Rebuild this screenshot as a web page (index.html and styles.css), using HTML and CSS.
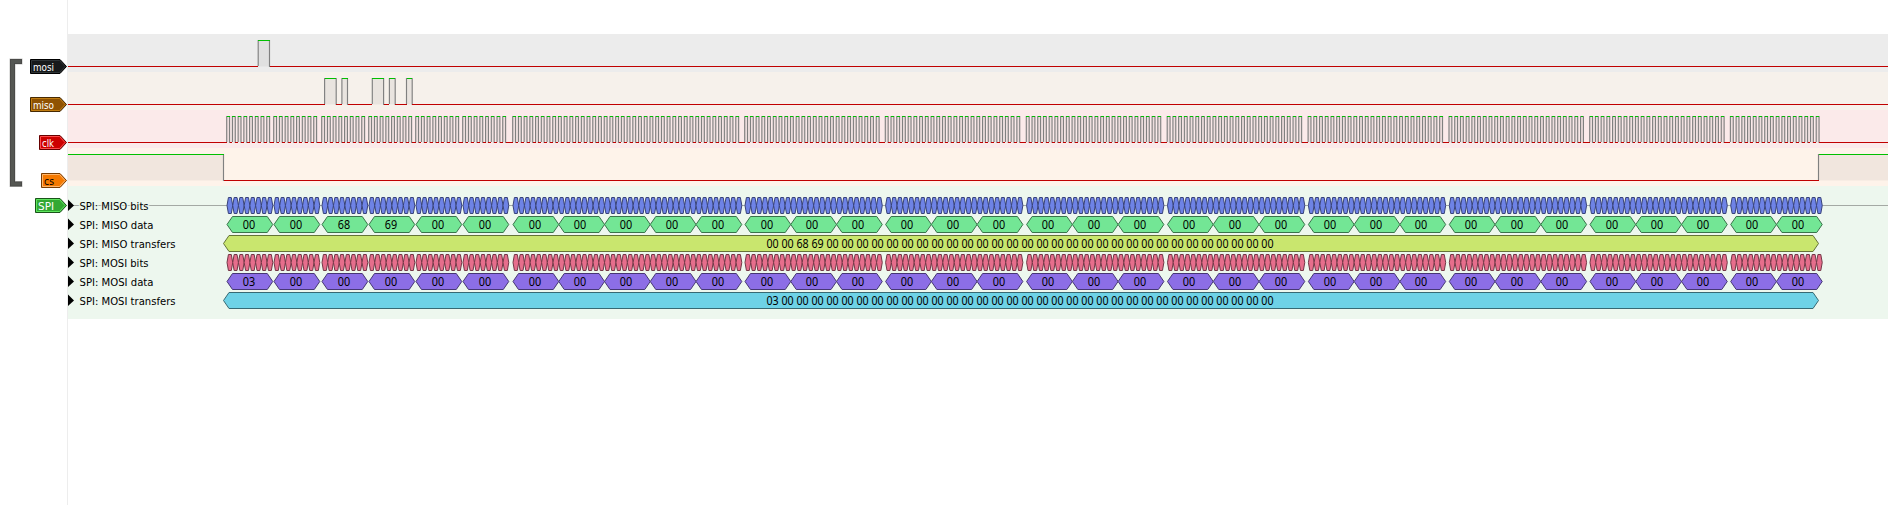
FILE: index.html
```html
<!DOCTYPE html>
<html lang="en">
<head>
<meta charset="utf-8">
<title>SPI capture</title>
<link rel="stylesheet" href="styles.css">
</head>
<body>
<div class="app">
  <aside class="headers">
    <svg class="bracket" width="16" height="130" viewBox="0 0 16 130"><path class="bracket-halo" d="M13.5 3.5H3.5V126H13.5"/><path class="bracket-edge" d="M13 3.5H3.5V126H13"/><path class="bracket-core" d="M12 3.5H3.5V126H12"/></svg>
    <div class="tags" id="tags"></div>
  </aside>
  <main class="view">
    <div class="trace mosi"></div>
    <div class="trace miso"></div>
    <div class="trace clk"></div>
    <div class="trace cs"></div>
    <div class="decoder"></div>
  </main>
</div>
<script src="script.js"></script>
</body>
</html>
```
FILE: styles.css
```css
* { box-sizing: border-box; }
body { margin: 0; background: #fff; font-family: "DejaVu Sans Condensed", "DejaVu Sans", sans-serif; font-size: 11.3px; color: #000; }
.app { display: flex; width: 1888px; height: 505px; overflow: hidden; }
.headers { width: 68px; flex: none; display: flex; justify-content: space-between; border-right: 1px solid #ededed; }
.bracket { margin: 58px 0 0 9px; flex: none; }
.bracket path { fill: none; }
.bracket-halo { stroke: #c4c4c2; stroke-width: 6; }
.bracket-edge { stroke: #4a4a48; stroke-width: 5; }
.bracket-core { stroke: #555753; stroke-width: 3; }
.tags { padding-top: 58px; display: flex; flex-direction: column; align-items: flex-end; }
.tag { display: block; margin-bottom: 22px; flex: none; }
.tag:nth-child(4) { margin-bottom: 9px; }
.view { flex: 1; padding-top: 34px; min-width: 0; }
.view svg { display: block; }
.trace { height: 38px; }
.mosi { background: #ececec; }
.miso { background: #f6f1eb; }
.clk { background: #fbeaea; }
.cs { background: #fef3ea; }
.decoder { height: 133px; padding-top: 10px; background: #edf7ee; }
.row { height: 19px; }
.low { stroke: #c00000; }
.high { stroke: #00c000; }
.edge { stroke: #808080; stroke-width: 1.15; }
.fill { fill: #000; fill-opacity: .05; }
.idle { stroke: #a4a9a4; }
.label { stroke: #edf7ee; stroke-width: 3px; paint-order: stroke; stroke-opacity: .75; }
.value, .bytes { font-family: "Noto Sans", "Open Sans", sans-serif; font-size: 11.8px; }
.value { text-anchor: middle; }
```
FILE: script.js
```js
const BIT = 5.72;
const WIDTH = 1820;
const LEFT = 68;
const groups = [[513, 5], [745, 3], [885.6, 3], [1026.6, 3], [1167.5, 3], [1308.4, 3], [1449.3, 3], [1590, 3], [1730.7, 2]];
const bytes = [227, 274, 322, 369, 416, 463];
groups.forEach(([x, n]) => { for (let i = 0; i < n; i++) bytes.push(x + i * BIT * 8); });

const svg = (h, body) => `<svg width="${WIDTH}" height="${h}" viewBox="${LEFT} 0 ${WIDTH} ${h}">${body}</svg>`;

function wave(pulses) {
  let fill = '', high = '', low = '', edge = '', x = LEFT;
  pulses.forEach(([a, b]) => {
    fill += `M${a} 6.5H${b}V32.5H${a}z`;
    low += `M${x} 32.5H${a}`;
    high += `M${a} 6.5H${b}`;
    if (a > LEFT) edge += `M${a} 6V32`;
    if (b < 1888) edge += `M${b} 6V33`;
    x = b;
  });
  low += `M${x} 32.5H1888`;
  return svg(38, `<path class="fill" d="${fill}"/><path class="edge" d="${edge}"/><path class="low" d="${low}" shape-rendering="crispEdges"/><path class="high" d="${high}" shape-rendering="crispEdges"/>`);
}

const clock = [];
bytes.forEach(b => { for (let i = 0; i < 8; i++) { const a = b - .3 + i * BIT; clock.push([a, a + 2.86]); } });
document.querySelector('.mosi').innerHTML = wave([[258.2, 269.5]]);
document.querySelector('.miso').innerHTML = wave([[324.6, 336.2], [341.9, 347.5], [372.3, 383.6], [389.4, 395.2], [406.5, 412.2]]);
document.querySelector('.clk').innerHTML = wave(clock);
document.querySelector('.cs').innerHTML = wave([[LEFT, 223.5], [1818.5, 1888]]);

const hex = (a, b, fill, stroke) => {
  const c = Math.min((b - a) / 4, 5.5);
  return `<path d="M${a} 9.5L${a + c} 1.5H${b - c}L${b} 9.5L${b - c} 17.5H${a + c}z" fill="${fill}" stroke="${stroke}"/>`;
};
const fit = w => `textLength="${w}" lengthAdjust="spacingAndGlyphs"`;
const bits = (fill, stroke) => bytes.map(b => Array.from({ length: 8 }, (_, i) => hex(b + i * BIT, b + (i + 1) * BIT, fill, stroke)).join('')).join('');
const data = (values, fill, stroke) => bytes.map((b, i) => hex(b, b + 8 * BIT, fill, stroke) + `<text class="value" x="${Math.round(b + 21.5)}" y="14" ${fit(12.4)}>${values[i]}</text>`).join('');
const transfer = (values, fill, stroke) => hex(223.5, 1818.5, fill, stroke) + `<text class="bytes" x="766.5" y="14" ${fit(507)}>${values.join(' ')}</text>`;

const miso = bytes.map((_, i) => ({ 2: '68', 3: '69' })[i] || '00');
const mosi = bytes.map((_, i) => i ? '00' : '03');
const rows = [
  ['SPI: MISO bits', 69, '<path class="idle" d="M68 9.5H1888"/>' + bits('#6e83e6', '#38427a')],
  ['SPI: MISO data', 74, data(miso, '#73e695', '#39734a')],
  ['SPI: MISO transfers', 96, transfer(miso, '#c9e66e', '#647337')],
  ['SPI: MOSI bits', 69, bits('#e66e8c', '#733746')],
  ['SPI: MOSI data', 74, data(mosi, '#8c6ee6', '#463773')],
  ['SPI: MOSI transfers', 96, transfer(mosi, '#6ed2e6', '#376973')]
];
document.querySelector('.decoder').innerHTML = rows.map(([name, w, body]) =>
  `<div class="row">${svg(19, body + `<path d="M68 3.5L74 9.5L68 15z"/><text class="label" x="79.5" y="14" ${fit(w)}>${name}</text>`)}</div>`).join('');

const tags = [
  ['mosi', 37, 21, '#16191a', '#000', '#2e3436', '#fff'],
  ['miso', 37, 21, '#8f5202', '#472901', '#c17d11', '#fff'],
  ['clk', 28, 12, '#cc0000', '#660000', '#ff4c4c', '#fff'],
  ['cs', 26, 10, '#f57900', '#7a3c00', '#ffb66c', '#000'],
  ['SPI', 32, 16, '#33a833', '#195419', '#5ee65e', '#fff']
];
document.getElementById('tags').innerHTML = tags.map(([name, w, tw, fill, edge, light, text]) =>
  `<svg class="tag" width="${w}" height="16"><path d="M.5 1.5H${w - 7}L${w - .5} 8.5L${w - 7} 15.5H.5z" fill="${fill}" stroke="${edge}"/><path d="M1.5 2.5H${w - 7.5}L${w - 2} 8.5L${w - 7.5} 14.5H1.5z" fill="none" stroke="${light}"/><text x="3" y="13" fill="${text}" ${fit(tw)}>${name}</text></svg>`).join('');
```
